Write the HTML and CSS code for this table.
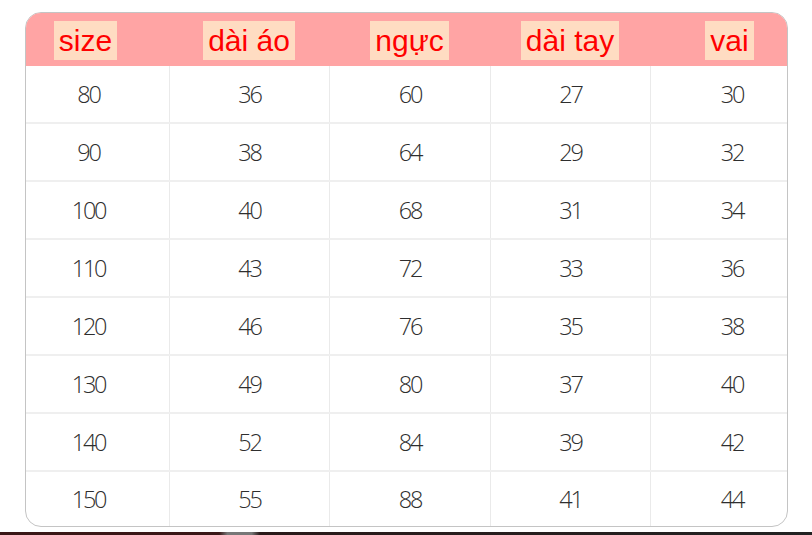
FILE: index.html
```html
<!DOCTYPE html>
<html lang="vi">
<head>
<meta charset="utf-8">
<title>Bảng size</title>
<link rel="stylesheet" href="styles.css">
</head>
<body>
<div class="page">
  <div class="table">
    <div class="row head">
      <div class="cell c1"><span class="label">size</span></div>
      <div class="cell"><span class="label">dài áo</span></div>
      <div class="cell"><span class="label">ngực</span></div>
      <div class="cell"><span class="label">dài tay</span></div>
      <div class="cell c5"><span class="label">vai</span></div>
    </div>
    <div class="row"><div class="cell c1">80</div><div class="cell">36</div><div class="cell">60</div><div class="cell">27</div><div class="cell c5">30</div></div>
    <div class="row"><div class="cell c1">90</div><div class="cell">38</div><div class="cell">64</div><div class="cell">29</div><div class="cell c5">32</div></div>
    <div class="row"><div class="cell c1">100</div><div class="cell">40</div><div class="cell">68</div><div class="cell">31</div><div class="cell c5">34</div></div>
    <div class="row"><div class="cell c1">110</div><div class="cell">43</div><div class="cell">72</div><div class="cell">33</div><div class="cell c5">36</div></div>
    <div class="row"><div class="cell c1">120</div><div class="cell">46</div><div class="cell">76</div><div class="cell">35</div><div class="cell c5">38</div></div>
    <div class="row"><div class="cell c1">130</div><div class="cell">49</div><div class="cell">80</div><div class="cell">37</div><div class="cell c5">40</div></div>
    <div class="row"><div class="cell c1">140</div><div class="cell">52</div><div class="cell">84</div><div class="cell">39</div><div class="cell c5">42</div></div>
    <div class="row last"><div class="cell c1">150</div><div class="cell">55</div><div class="cell">88</div><div class="cell">41</div><div class="cell c5">44</div></div>
  </div>
  <div class="strip"></div>
</div>
</body>
</html>
```
FILE: styles.css
```css
* { box-sizing: border-box; }
html, body { margin: 0; padding: 0; background: #ffffff; }
.page {
  width: 812px;
  height: 535px;
  display: flex;
  flex-direction: column;
  padding-top: 12px;
  overflow: hidden;
}
.table {
  margin-left: 25px;
  width: 763px;
  height: 515px;
  border: 1px solid #c4c4c4;
  border-radius: 16px;
  overflow: hidden;
  display: flex;
  flex-direction: column;
  background: #fff;
}
.row {
  display: grid;
  grid-template-columns: 143px 160px 161px 160px 1fr;
  height: 58px;
  border-bottom: 2px solid #efefef;
  font-family: "Open Sans", "DejaVu Sans", sans-serif;
  font-weight: 300;
  font-size: 23.5px;
  letter-spacing: -2.2px;
  color: #2e2e2e;
}
.row.head {
  height: 53px;
  background: #ffa4a4;
  border-bottom: none;
}
.row.last { border-bottom: none; flex: 1; }
.cell {
  display: flex;
  align-items: center;
  justify-content: center;
  border-left: 1px solid #eaeaea;
}
.head .cell { border-left: none; }
.cell.c1 { border-left: none; padding-right: 18px; }
.cell.c5 { padding-left: 26px; }
.head .cell.c1 { padding-right: 24px; }
.head .cell.c5 { padding-left: 22px; }
.label {
  background: #ffdcc2;
  color: #ff0000;
  font-family: "Liberation Sans", Arial, sans-serif;
  font-weight: 400;
  font-size: 30px;
  letter-spacing: 0;
  line-height: 39px;
  height: 39px;
  padding: 0 5px;
  margin-top: 1px;
}
.strip {
  margin-top: auto;
  height: 3px;
  background: linear-gradient(90deg, #3a1616 0%, #3a1818 27%, #777 28%, #777 31%, #2a1a1a 32%, #222 100%);
}
```
